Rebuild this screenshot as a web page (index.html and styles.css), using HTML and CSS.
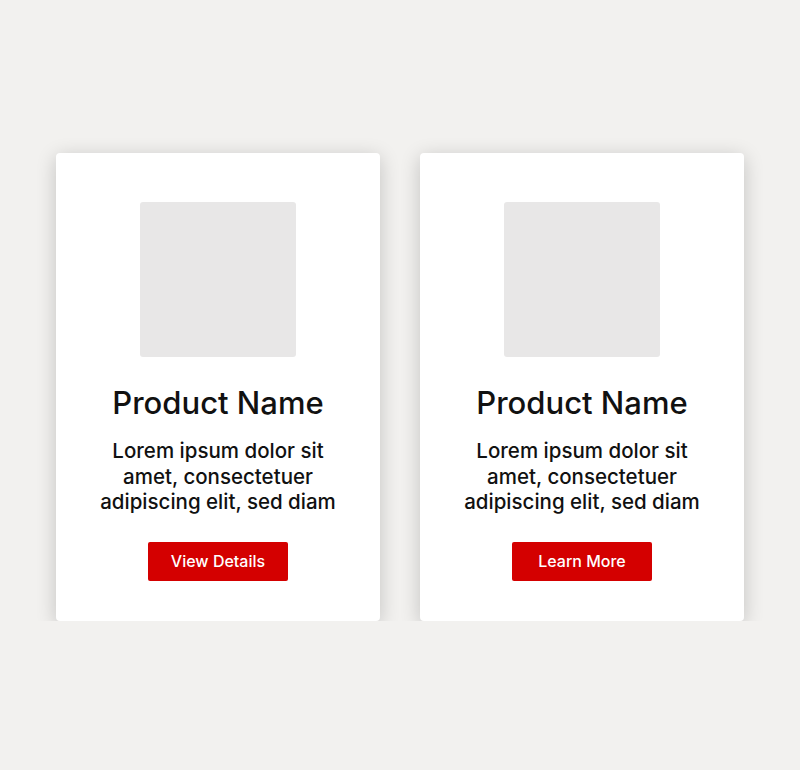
FILE: index.html
```html
<!DOCTYPE html>
<html lang="en">
<head>
	<meta charset="utf-8">
	<meta name="viewport" content="width=device-width, initial-scale=1.0">
	<title>Product cards</title>
	<link rel="stylesheet" href="styles.css">
</head>
<body>
	<div class="cards">
		<div class="card">
			<div class="thumb"></div>
			<h2 class="name">Product Name</h2>
			<p class="desc">Lorem ipsum dolor sit amet, consectetuer adipiscing elit, sed diam</p>
			<button class="btn">View Details</button>
		</div>
		<div class="card">
			<div class="thumb"></div>
			<h2 class="name">Product Name</h2>
			<p class="desc">Lorem ipsum dolor sit amet, consectetuer adipiscing elit, sed diam</p>
			<button class="btn">Learn More</button>
		</div>
	</div>
</body>
</html>
```

FILE: styles.css
```css
body {
	margin: 0;
	background-color: #f2f1ef;
	font-family: Inter, "Liberation Sans", Arial, sans-serif;
	color: #111;
}

.cards {
	display: flex;
	justify-content: center;
	gap: 40px;
	padding-top: 153px;
}

.card {
	width: 324px;
	box-sizing: border-box;
	padding: 49px 20px 40px;
	background-color: #fff;
	border-radius: 4px;
	box-shadow: 0 4px 20px rgba(0, 0, 0, 0.2);
	display: flex;
	flex-direction: column;
	align-items: center;
	text-align: center;
}

.thumb {
	width: 156px;
	height: 155px;
	background-color: #e8e7e7;
	border-radius: 3px;
}

.name {
	margin: 28px 0 0;
	font-size: 31px;
	font-weight: 500;
	line-height: 36px;
}

.desc {
	margin: 17px 0 0;
	width: 248px;
	font-size: 20.5px;
	font-weight: 500;
	line-height: 25.5px;
}

.btn {
	margin-top: 27px;
	width: 140px;
	height: 39px;
	border: none;
	border-radius: 2px;
	background-color: #d40000;
	color: #fff;
	font-family: inherit;
	font-size: 16px;
	font-weight: 500;
}
```
